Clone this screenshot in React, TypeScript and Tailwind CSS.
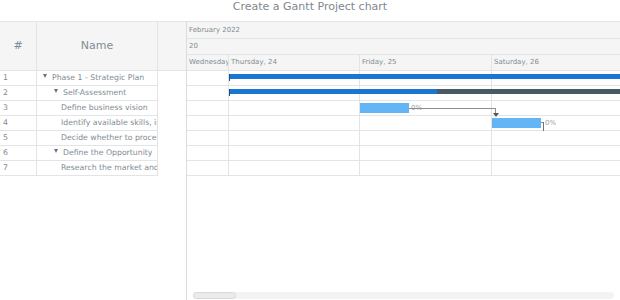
const rows = [
  { n: 1, name: 'Phase 1 - Strategic Plan', pad: 'pl-[6px]', toggle: true },
  { n: 2, name: 'Self-Assessment', pad: 'pl-[17px]', toggle: true },
  { n: 3, name: 'Define business vision', pad: 'pl-[24px]', toggle: false },
  { n: 4, name: 'Identify available skills, information and support', pad: 'pl-[24px]', toggle: false },
  { n: 5, name: 'Decide whether to proceed', pad: 'pl-[24px]', toggle: false },
  { n: 6, name: 'Define the Opportunity', pad: 'pl-[17px]', toggle: true },
  { n: 7, name: 'Research the market and competition', pad: 'pl-[24px]', toggle: false },
];

const days = [
  { label: 'Wednesday, 23', w: 'w-[42px]' },
  { label: 'Thursday, 24', w: 'w-[131px]' },
  { label: 'Friday, 25', w: 'w-[132px]' },
  { label: 'Saturday, 26', w: 'w-[131px]' },
];

function Toggle() {
  return (
    <span className="mr-[5px] inline-block h-0 w-0 border-x-[2.5px] border-t-[4px] border-x-transparent border-t-[#6b747b] align-[2px]" />
  );
}

function DayCells() {
  return (
    <>
      {days.map((d) => (
        <div key={d.label} className={`${d.w} h-full shrink-0 border-r border-[#e4e4e4]`} />
      ))}
    </>
  );
}

export default function App() {
  return (
    <div
      className="h-[300px] w-[620px] overflow-hidden bg-white text-[#838c93]"
      style={{ fontFamily: '"DejaVu Sans", sans-serif' }}
    >
      <div className="h-[21px] text-center text-[11px] leading-[14px] text-[#7f888f]">
        Create a Gantt Project chart
      </div>

      <div className="flex h-[279px]">
        {/* data grid */}
        <div className="w-[186px] shrink-0">
          <div className="flex h-[50px] border-y border-[#e4e4e4] bg-[#f5f5f5]">
            <div className="flex w-[37px] items-center justify-center border-r border-[#e4e4e4] text-[11px]">#</div>
            <div className="flex w-[121px] items-center justify-center border-r border-[#e4e4e4] text-[11px]">Name</div>
            <div className="flex-1" />
          </div>
          {rows.map((r) => (
            <div key={r.n} className="flex h-[15px] w-[158px] border-b border-r border-[#e4e4e4] text-[7.75px] leading-[14px]">
              <div className="w-[37px] shrink-0 border-r border-[#e4e4e4] pl-[3px]">{r.n}</div>
              <div className={`${r.pad} overflow-hidden whitespace-nowrap`}>
                {r.toggle && <Toggle />}
                {r.name}
              </div>
            </div>
          ))}
        </div>

        {/* timeline */}
        <div className="relative flex-1 overflow-hidden border-l border-[#dcdcdc]">
          <div className="border-y border-[#e4e4e4] bg-[#f5f5f5] text-[7px]">
            <div className="flex h-[17px] items-center border-b border-[#e4e4e4] pl-[2px]">February 2022</div>
            <div className="flex h-[16px] items-center border-b border-[#e4e4e4] pl-[2px]">20</div>
            <div className="flex h-[15px]">
              {days.map((d) => (
                <div key={d.label} className={`${d.w} shrink-0 overflow-hidden whitespace-nowrap border-r border-[#e4e4e4] pl-[2px] leading-[15px]`}>
                  {d.label}
                </div>
              ))}
            </div>
          </div>

          <div className="relative">
            {rows.map((r) => (
              <div key={r.n} className="flex h-[15px] border-b border-[#e4e4e4]">
                <DayCells />
              </div>
            ))}

            {/* Phase 1 */}
            <div className="absolute left-[42px] right-0 top-[2.5px] h-[5px] bg-[#1976d2]" />
            <div className="absolute left-[42px] top-[2.5px] h-[7px] w-[1px] bg-[#0d4f94]" />
            {/* Self-Assessment */}
            <div className="absolute left-[42px] right-0 top-[17.5px] flex h-[5px]">
              <div className="w-[208px] bg-[#1976d2]" />
              <div className="flex-1 bg-[#485a64]" />
            </div>
            <div className="absolute left-[42px] top-[17.5px] h-[7px] w-[1px] bg-[#0d4f94]" />

            {/* Define business vision */}
            <div className="absolute left-[173px] top-[32px] h-[10px] w-[49px] bg-[#64b5f6]" />
            <div className="absolute left-[224px] top-[32px] text-[7px] leading-[10px] text-[#9aa1a7]">0%</div>
            <div className="absolute left-[222px] top-[37px] h-[1px] w-[87px] bg-[#8b8f93]" />
            <div className="absolute left-[308px] top-[37px] h-[7px] w-[1px] bg-[#8b8f93]" />
            <div className="absolute left-[305.5px] top-[42px] h-0 w-0 border-x-[3px] border-t-[4px] border-x-transparent border-t-[#505a60]" />

            {/* Identify available skills */}
            <div className="absolute left-[305px] top-[47px] h-[10px] w-[49px] bg-[#64b5f6]" />
            <div className="absolute left-[354px] top-[51px] h-[1px] w-[3px] bg-[#8b8f93]" />
            <div className="absolute left-[356px] top-[51px] h-[9px] w-[1px] bg-[#6b7277]" />
            <div className="absolute left-[358px] top-[47px] text-[7px] leading-[10px] text-[#9aa1a7]">0%</div>
          </div>

          {/* scrollbar */}
          <div className="absolute bottom-[1px] left-[6px] right-[6px] h-[7px] rounded-full bg-[#f3f3f3]">
            <div className="h-full w-[43px] rounded-full border border-[#d9d9d9] bg-[#ebebeb]" />
          </div>
        </div>
      </div>
    </div>
  );
}
